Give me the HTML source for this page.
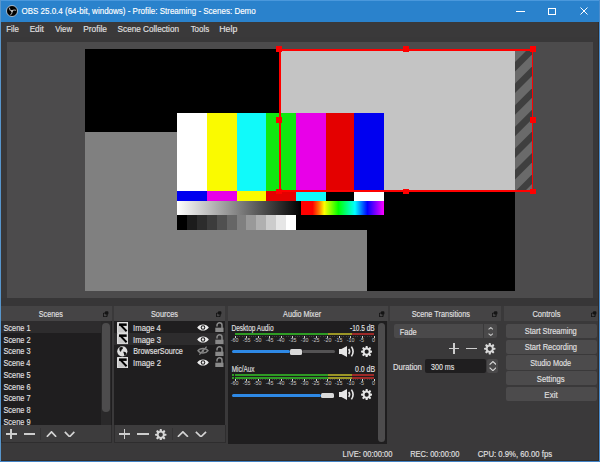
<!DOCTYPE html>
<html><head><meta charset="utf-8">
<style>
*{margin:0;padding:0;box-sizing:border-box}
html,body{width:600px;height:462px;overflow:hidden;background:#3a393a;font-family:"Liberation Sans",sans-serif;color:#e1e0e1}
.a{position:absolute}
.t{position:absolute;white-space:nowrap;line-height:1;transform-origin:0 0}
</style></head><body>
<div class="a" style="left:0px;top:0px;width:600px;height:22px;background:#2a82cc;"></div>
<div class="a" style="left:0px;top:0px;width:600px;height:1px;background:#4a98dc;"></div>
<svg class="a" style="left:5px;top:4px" width="14" height="14" viewBox="0 0 14 14"><circle cx="7" cy="7" r="5.5" fill="#000" stroke="#dfe8f2" stroke-width="0.7"/><g fill="none" stroke="#a8a8a8" stroke-width="1.1" stroke-linecap="round"><path d="M7 7Q4.6 6.6 4.4 4.0"/><path d="M7 7Q8.6 5.4 10.6 6.2"/><path d="M7 7Q7.6 9.4 5.8 10.6"/></g><circle cx="7" cy="7" r="0.9" fill="#c8c8c8"/></svg>
<div class="a" style="left:516px;top:10.5px;width:9px;height:1px;background:#ffffff;"></div>
<div class="a" style="left:548px;top:7.5px;width:7.5px;height:7px;background:transparent;border:1px solid #fff;box-sizing:border-box"></div>
<svg class="a" style="left:580px;top:7px" width="8" height="8" viewBox="0 0 8 8"><path d="M0.5 0.5L7.5 7.5M7.5 0.5L0.5 7.5" stroke="#fff" stroke-width="1"/></svg>
<div class="a" style="left:1px;top:22px;width:598px;height:15px;background:#3a393a;"></div>
<div class="a" style="left:1px;top:37px;width:598px;height:269px;background:#393839;"></div>
<div class="a" style="left:7px;top:42px;width:586px;height:255.5px;background:#4c4b4c;"></div>
<div class="a" style="left:85px;top:49px;width:430px;height:242px;background:#000;"></div>
<div class="a" style="left:85px;top:132px;width:282px;height:159px;background:#808080;"></div>
<div class="a" style="left:280px;top:49px;width:235px;height:142px;background:#c4c4c4;"></div>
<svg class="a" style="left:515px;top:49px" width="17" height="142" viewBox="0 0 17 142"><rect width="17" height="142" fill="#6a6a6a"/><path d="M-8.60 0L0.90 0L-199.10 200L-208.60 200Z" fill="#3f3f3f"/><path d="M13.00 0L22.50 0L-177.50 200L-187.00 200Z" fill="#3f3f3f"/><path d="M34.60 0L44.10 0L-155.90 200L-165.40 200Z" fill="#3f3f3f"/><path d="M56.20 0L65.70 0L-134.30 200L-143.80 200Z" fill="#3f3f3f"/><path d="M77.80 0L87.30 0L-112.70 200L-122.20 200Z" fill="#3f3f3f"/><path d="M99.40 0L108.90 0L-91.10 200L-100.60 200Z" fill="#3f3f3f"/><path d="M121.00 0L130.50 0L-69.50 200L-79.00 200Z" fill="#3f3f3f"/><path d="M142.60 0L152.10 0L-47.90 200L-57.40 200Z" fill="#3f3f3f"/><path d="M164.20 0L173.70 0L-26.30 200L-35.80 200Z" fill="#3f3f3f"/></svg>
<div class="a" style="left:177px;top:113px;width:207px;height:117px;background:#000;"></div>
<div class="a" style="left:177px;top:113px;width:30px;height:78px;background:#ffffff;"></div>
<div class="a" style="left:177px;top:191px;width:30px;height:10px;background:#0000f0;"></div>
<div class="a" style="left:207px;top:113px;width:30px;height:78px;background:#fafa00;"></div>
<div class="a" style="left:207px;top:191px;width:30px;height:10px;background:#e800e8;"></div>
<div class="a" style="left:237px;top:113px;width:29px;height:78px;background:#10fafa;"></div>
<div class="a" style="left:237px;top:191px;width:29px;height:10px;background:#fafa00;"></div>
<div class="a" style="left:266px;top:113px;width:30px;height:78px;background:#10e810;"></div>
<div class="a" style="left:266px;top:191px;width:30px;height:10px;background:#e40000;"></div>
<div class="a" style="left:296px;top:113px;width:30px;height:78px;background:#e800e8;"></div>
<div class="a" style="left:296px;top:191px;width:30px;height:10px;background:#10fafa;"></div>
<div class="a" style="left:326px;top:113px;width:28px;height:78px;background:#e40000;"></div>
<div class="a" style="left:326px;top:191px;width:28px;height:10px;background:#000000;"></div>
<div class="a" style="left:354px;top:113px;width:30px;height:78px;background:#0000f0;"></div>
<div class="a" style="left:354px;top:191px;width:30px;height:10px;background:#ffffff;"></div>
<div class="a" style="left:177px;top:201px;width:124px;height:14px;background:linear-gradient(to right,#fff,#000);"></div>
<div class="a" style="left:301px;top:201px;width:83px;height:14px;background:linear-gradient(to right,#f00 0%,#f00 14%,#ff8000 22%,#ffff00 28%,#00ff00 45%,#00ffff 65%,#0000ff 80%,#ff00ff 100%);"></div>
<div class="a" style="left:177.0px;top:215px;width:9.97px;height:15px;background:#000;"></div>
<div class="a" style="left:186.92px;top:215px;width:9.97px;height:15px;background:#1c1c1c;"></div>
<div class="a" style="left:196.83px;top:215px;width:9.97px;height:15px;background:#2c2c2c;"></div>
<div class="a" style="left:206.75px;top:215px;width:9.97px;height:15px;background:#3c3c3c;"></div>
<div class="a" style="left:216.67px;top:215px;width:9.97px;height:15px;background:#505050;"></div>
<div class="a" style="left:226.58px;top:215px;width:9.97px;height:15px;background:#666;"></div>
<div class="a" style="left:236.5px;top:215px;width:9.97px;height:15px;background:#808080;"></div>
<div class="a" style="left:246.42px;top:215px;width:9.97px;height:15px;background:#999;"></div>
<div class="a" style="left:256.33px;top:215px;width:9.97px;height:15px;background:#b0b0b0;"></div>
<div class="a" style="left:266.25px;top:215px;width:9.97px;height:15px;background:#ccc;"></div>
<div class="a" style="left:276.17px;top:215px;width:9.97px;height:15px;background:#e6e6e6;"></div>
<div class="a" style="left:286.08px;top:215px;width:9.97px;height:15px;background:#fff;"></div>
<div class="a" style="left:279.2px;top:49.2px;width:254px;height:1.7px;background:#f00;"></div>
<div class="a" style="left:279.2px;top:189.5px;width:254px;height:2px;background:#f00;"></div>
<div class="a" style="left:279.2px;top:49.2px;width:1.7px;height:142px;background:#f00;"></div>
<div class="a" style="left:531.5px;top:49.2px;width:1.9px;height:142px;background:#f00;"></div>
<div class="a" style="left:276px;top:46.1px;width:6px;height:5.8px;background:#f00;"></div>
<div class="a" style="left:276px;top:117.39999999999999px;width:6px;height:5.8px;background:#f00;"></div>
<div class="a" style="left:276px;top:188.7px;width:6px;height:5.8px;background:#f00;"></div>
<div class="a" style="left:403px;top:46.1px;width:6px;height:5.8px;background:#f00;"></div>
<div class="a" style="left:403px;top:188.7px;width:6px;height:5.8px;background:#f00;"></div>
<div class="a" style="left:530px;top:46.1px;width:6px;height:5.8px;background:#f00;"></div>
<div class="a" style="left:530px;top:117.39999999999999px;width:6px;height:5.8px;background:#f00;"></div>
<div class="a" style="left:530px;top:188.7px;width:6px;height:5.8px;background:#f00;"></div>
<div class="a" style="left:1px;top:297.5px;width:598px;height:8.5px;background:#373637;"></div>
<div class="a" style="left:1px;top:443px;width:598px;height:17px;background:#3a393a;"></div>
<div class="a" style="left:1px;top:306.2px;width:111px;height:14.6px;background:#454445;"></div>
<svg class="a" style="left:103px;top:311px" width="6" height="6" viewBox="0 0 6 6"><rect x="2" y="0.2" width="3.4" height="3.4" rx="0.8" fill="#151515"/><rect x="0.3" y="2" width="3.8" height="3.7" rx="1.2" fill="none" stroke="#151515" stroke-width="1.1"/></svg>
<div class="a" style="left:1px;top:321px;width:111px;height:104px;background:#1f1e1f;"></div>
<div class="a" style="left:1px;top:321px;width:99.8px;height:12.4px;background:#2d2c2d;"></div>
<div class="a" style="left:100.8px;top:321px;width:10.6px;height:104px;background:#2a292a;"></div>
<div class="a" style="left:102.3px;top:322.8px;width:7.6px;height:89px;background:#4d4c4d;border-radius:3.8px"></div>
<div class="a" style="left:1px;top:424.8px;width:111px;height:18.6px;background:#3d3c3d;border:1px solid #2e2d2e;border-top:none;box-sizing:border-box"></div>
<div class="a" style="left:5.5px;top:433.2px;width:11.0px;height:1.4px;background:#cdcdcd;"></div>
<div class="a" style="left:10.3px;top:428.8px;width:1.4px;height:10.199999999999989px;background:#cdcdcd;"></div>
<div class="a" style="left:24px;top:433.2px;width:11px;height:1.4px;background:#cdcdcd;"></div>
<div class="a" style="left:40px;top:428px;width:1px;height:12px;background:#343334;"></div>
<svg class="a" style="left:46px;top:430.6px" width="11" height="6.599999999999966" viewBox="0 0 11 6.599999999999966"><path d="M0.85 5.749999999999966L5.5 0.85L10.15 5.749999999999966" fill="none" stroke="#d4d4d4" stroke-width="1.7"/></svg>
<svg class="a" style="left:63.8px;top:430.6px" width="11.200000000000003" height="6.599999999999966" viewBox="0 0 11.200000000000003 6.599999999999966"><path d="M0.85 0.85L5.600000000000001 5.749999999999966L10.350000000000003 0.85" fill="none" stroke="#d4d4d4" stroke-width="1.7"/></svg>
<div class="a" style="left:114px;top:306.2px;width:111px;height:14.6px;background:#454445;"></div>
<svg class="a" style="left:216px;top:311px" width="6" height="6" viewBox="0 0 6 6"><rect x="2" y="0.2" width="3.4" height="3.4" rx="0.8" fill="#151515"/><rect x="0.3" y="2" width="3.8" height="3.7" rx="1.2" fill="none" stroke="#151515" stroke-width="1.1"/></svg>
<div class="a" style="left:114px;top:321px;width:111px;height:104px;background:#1f1e1f;"></div>
<div class="a" style="left:114px;top:333.2px;width:111px;height:12px;background:#2d2c2d;"></div>
<svg class="a" style="left:116.8px;top:321.7px" width="11.5" height="11.2" viewBox="0 0 11.5 11.2"><rect x="0.6" y="0.6" width="10.3" height="10" fill="#dadada" stroke="#eaeaea" stroke-width="1"/><path d="M1.2 2.2L10.3 10.4H1.2Z" fill="#c6c6c6"/><rect x="2.0" y="1.4" width="7.7" height="2.5" fill="#000"/><path d="M3.2 2.6L9.6 9.2" stroke="#000" stroke-width="2"/></svg>
<svg class="a" style="left:197.2px;top:324.2px" width="12" height="7" viewBox="0 0 12 7"><path d="M0.2 3.5C2.6 -0.6 9.4 -0.6 11.8 3.5C9.4 7.6 2.6 7.6 0.2 3.5Z" fill="#ececec"/><circle cx="6" cy="3.5" r="2.3" fill="#1f1e1f"/><circle cx="6" cy="3.5" r="1.2" fill="#ececec"/></svg>
<svg class="a" style="left:214.5px;top:322.2px" width="9" height="10" viewBox="0 0 9 10"><path d="M2.0 4.4V3.3A2.5 2.5 0 0 1 7 3.3V6" fill="none" stroke="#8a8a8a" stroke-width="1.5"/><rect x="0.3" y="5.7" width="8.2" height="4.6" fill="#8a8a8a"/></svg>
<svg class="a" style="left:116.8px;top:333.4px" width="11.5" height="11.2" viewBox="0 0 11.5 11.2"><rect x="0.6" y="0.6" width="10.3" height="10" fill="#dadada" stroke="#eaeaea" stroke-width="1"/><path d="M1.2 2.2L10.3 10.4H1.2Z" fill="#c6c6c6"/><rect x="2.0" y="1.4" width="7.7" height="2.5" fill="#000"/><path d="M3.2 2.6L9.6 9.2" stroke="#000" stroke-width="2"/></svg>
<svg class="a" style="left:197.2px;top:335.9px" width="12" height="7" viewBox="0 0 12 7"><path d="M0.2 3.5C2.6 -0.6 9.4 -0.6 11.8 3.5C9.4 7.6 2.6 7.6 0.2 3.5Z" fill="#ececec"/><circle cx="6" cy="3.5" r="2.3" fill="#1f1e1f"/><circle cx="6" cy="3.5" r="1.2" fill="#ececec"/></svg>
<svg class="a" style="left:214.5px;top:333.9px" width="9" height="10" viewBox="0 0 9 10"><path d="M2.0 4.4V3.3A2.5 2.5 0 0 1 7 3.3V6" fill="none" stroke="#8a8a8a" stroke-width="1.5"/><rect x="0.3" y="5.7" width="8.2" height="4.6" fill="#8a8a8a"/></svg>
<svg class="a" style="left:116.6px;top:345.6px" width="11" height="11" viewBox="0 0 11 11"><circle cx="5.3" cy="5.3" r="5.1" fill="#dedede"/><path d="M2.4 1.4Q4.8 0.2 6.2 1.8Q5.6 3.4 4.6 3.8Q4.4 5.6 3.2 5.8Q2 4 2.4 1.4Z" fill="#111"/><path d="M6.2 5.8Q8.6 5.2 9.6 7.4Q8.8 9.2 7.2 9.8Q7.2 8 6.2 5.8Z" fill="#111"/></svg>
<svg class="a" style="left:197.2px;top:345.9px" width="12" height="9" viewBox="0 0 12 9"><path d="M1 4.7C3 1.6 9 1.6 11 4.7C9 7.8 3 7.8 1 4.7Z" fill="none" stroke="#858585" stroke-width="1.5"/><circle cx="6" cy="4.7" r="1.2" fill="#858585"/><path d="M2.4 8.6L9.6 0.6" stroke="#858585" stroke-width="1.3"/></svg>
<svg class="a" style="left:214.5px;top:345.59999999999997px" width="9" height="10" viewBox="0 0 9 10"><path d="M2.0 4.4V3.3A2.5 2.5 0 0 1 7 3.3V6" fill="none" stroke="#8a8a8a" stroke-width="1.5"/><rect x="0.3" y="5.7" width="8.2" height="4.6" fill="#8a8a8a"/></svg>
<svg class="a" style="left:116.8px;top:356.8px" width="11.5" height="11.2" viewBox="0 0 11.5 11.2"><rect x="0.6" y="0.6" width="10.3" height="10" fill="#dadada" stroke="#eaeaea" stroke-width="1"/><path d="M1.2 2.2L10.3 10.4H1.2Z" fill="#c6c6c6"/><rect x="2.0" y="1.4" width="7.7" height="2.5" fill="#000"/><path d="M3.2 2.6L9.6 9.2" stroke="#000" stroke-width="2"/></svg>
<svg class="a" style="left:197.2px;top:359.3px" width="12" height="7" viewBox="0 0 12 7"><path d="M0.2 3.5C2.6 -0.6 9.4 -0.6 11.8 3.5C9.4 7.6 2.6 7.6 0.2 3.5Z" fill="#ececec"/><circle cx="6" cy="3.5" r="2.3" fill="#1f1e1f"/><circle cx="6" cy="3.5" r="1.2" fill="#ececec"/></svg>
<svg class="a" style="left:214.5px;top:357.3px" width="9" height="10" viewBox="0 0 9 10"><path d="M2.0 4.4V3.3A2.5 2.5 0 0 1 7 3.3V6" fill="none" stroke="#8a8a8a" stroke-width="1.5"/><rect x="0.3" y="5.7" width="8.2" height="4.6" fill="#8a8a8a"/></svg>
<div class="a" style="left:114px;top:424.8px;width:111.5px;height:18.6px;background:#3d3c3d;border:1px solid #2e2d2e;border-top:none;box-sizing:border-box"></div>
<div class="a" style="left:119px;top:433.40000000000003px;width:11.300000000000011px;height:1.4px;background:#cdcdcd;"></div>
<div class="a" style="left:123.95px;top:429px;width:1.4px;height:10.199999999999989px;background:#cdcdcd;"></div>
<div class="a" style="left:137.3px;top:433.3px;width:11.399999999999977px;height:1.4px;background:#cdcdcd;"></div>
<svg class="a" style="left:155.2px;top:428.5px" width="11.5" height="11.5" viewBox="0 0 11.5 11.5"><path fill-rule="evenodd" d="M11.44,4.89 L11.44,6.61 L9.36,7.11 L9.26,7.34 L10.38,9.16 L9.16,10.38 L7.34,9.26 L7.11,9.36 L6.61,11.44 L4.89,11.44 L4.39,9.36 L4.16,9.26 L2.34,10.38 L1.12,9.16 L2.24,7.34 L2.14,7.11 L0.06,6.61 L0.06,4.89 L2.14,4.39 L2.24,4.16 L1.12,2.34 L2.34,1.12 L4.16,2.24 L4.39,2.14 L4.89,0.06 L6.61,0.06 L7.11,2.14 L7.34,2.24 L9.16,1.12 L10.38,2.34 L9.26,4.16 L9.36,4.39Z M5.75 3.6225A2.1275 2.1275 0 1 0 5.75 7.8774999999999995A2.1275 2.1275 0 1 0 5.75 3.6225Z" fill="#d8d8d8"/></svg>
<div class="a" style="left:171.5px;top:428px;width:1px;height:12px;background:#343334;"></div>
<svg class="a" style="left:177px;top:430.6px" width="11.800000000000011" height="6.599999999999966" viewBox="0 0 11.800000000000011 6.599999999999966"><path d="M0.85 5.749999999999966L5.900000000000006 0.85L10.950000000000012 5.749999999999966" fill="none" stroke="#d4d4d4" stroke-width="1.7"/></svg>
<svg class="a" style="left:195.3px;top:430.6px" width="11.899999999999977" height="6.599999999999966" viewBox="0 0 11.899999999999977 6.599999999999966"><path d="M0.85 0.85L5.949999999999989 5.749999999999966L11.049999999999978 0.85" fill="none" stroke="#d4d4d4" stroke-width="1.7"/></svg>
<div class="a" style="left:227.5px;top:306.2px;width:160.5px;height:14.6px;background:#454445;"></div>
<svg class="a" style="left:378.6px;top:311px" width="6" height="6" viewBox="0 0 6 6"><rect x="2" y="0.2" width="3.4" height="3.4" rx="0.8" fill="#151515"/><rect x="0.3" y="2" width="3.8" height="3.7" rx="1.2" fill="none" stroke="#151515" stroke-width="1.1"/></svg>
<div class="a" style="left:227.5px;top:321px;width:159.5px;height:122.6px;background:#1f1e1f;"></div>
<div class="a" style="left:235px;top:333.2px;width:92.67px;height:2.2px;background:#2e9b24;"></div>
<div class="a" style="left:327.67px;top:333.2px;width:24.79px;height:2.2px;background:#9a9626;"></div>
<div class="a" style="left:352.46px;top:333.2px;width:21.54px;height:2.2px;background:#9e2a28;"></div>
<div class="a" style="left:234.5px;top:335.5px;width:1px;height:2px;background:#d0d0d0;"></div>
<div class="a" style="left:236.92px;top:335.5px;width:0.8px;height:1px;background:#444344;"></div>
<div class="a" style="left:239.23px;top:335.5px;width:0.8px;height:1px;background:#444344;"></div>
<div class="a" style="left:241.55px;top:335.5px;width:0.8px;height:1px;background:#444344;"></div>
<div class="a" style="left:243.87px;top:335.5px;width:0.8px;height:1px;background:#444344;"></div>
<div class="a" style="left:246.08px;top:335.5px;width:1px;height:2px;background:#d0d0d0;"></div>
<div class="a" style="left:248.5px;top:335.5px;width:0.8px;height:1px;background:#444344;"></div>
<div class="a" style="left:250.82px;top:335.5px;width:0.8px;height:1px;background:#444344;"></div>
<div class="a" style="left:253.13px;top:335.5px;width:0.8px;height:1px;background:#444344;"></div>
<div class="a" style="left:255.45px;top:335.5px;width:0.8px;height:1px;background:#444344;"></div>
<div class="a" style="left:257.67px;top:335.5px;width:1px;height:2px;background:#d0d0d0;"></div>
<div class="a" style="left:260.08px;top:335.5px;width:0.8px;height:1px;background:#444344;"></div>
<div class="a" style="left:262.4px;top:335.5px;width:0.8px;height:1px;background:#444344;"></div>
<div class="a" style="left:264.72px;top:335.5px;width:0.8px;height:1px;background:#444344;"></div>
<div class="a" style="left:267.03px;top:335.5px;width:0.8px;height:1px;background:#444344;"></div>
<div class="a" style="left:269.25px;top:335.5px;width:1px;height:2px;background:#d0d0d0;"></div>
<div class="a" style="left:271.67px;top:335.5px;width:0.8px;height:1px;background:#444344;"></div>
<div class="a" style="left:273.98px;top:335.5px;width:0.8px;height:1px;background:#444344;"></div>
<div class="a" style="left:276.3px;top:335.5px;width:0.8px;height:1px;background:#444344;"></div>
<div class="a" style="left:278.62px;top:335.5px;width:0.8px;height:1px;background:#444344;"></div>
<div class="a" style="left:280.83px;top:335.5px;width:1px;height:2px;background:#d0d0d0;"></div>
<div class="a" style="left:283.25px;top:335.5px;width:0.8px;height:1px;background:#444344;"></div>
<div class="a" style="left:285.57px;top:335.5px;width:0.8px;height:1px;background:#444344;"></div>
<div class="a" style="left:287.88px;top:335.5px;width:0.8px;height:1px;background:#444344;"></div>
<div class="a" style="left:290.2px;top:335.5px;width:0.8px;height:1px;background:#444344;"></div>
<div class="a" style="left:292.42px;top:335.5px;width:1px;height:2px;background:#d0d0d0;"></div>
<div class="a" style="left:294.83px;top:335.5px;width:0.8px;height:1px;background:#444344;"></div>
<div class="a" style="left:297.15px;top:335.5px;width:0.8px;height:1px;background:#444344;"></div>
<div class="a" style="left:299.47px;top:335.5px;width:0.8px;height:1px;background:#444344;"></div>
<div class="a" style="left:301.78px;top:335.5px;width:0.8px;height:1px;background:#444344;"></div>
<div class="a" style="left:304.0px;top:335.5px;width:1px;height:2px;background:#d0d0d0;"></div>
<div class="a" style="left:306.42px;top:335.5px;width:0.8px;height:1px;background:#444344;"></div>
<div class="a" style="left:308.73px;top:335.5px;width:0.8px;height:1px;background:#444344;"></div>
<div class="a" style="left:311.05px;top:335.5px;width:0.8px;height:1px;background:#444344;"></div>
<div class="a" style="left:313.37px;top:335.5px;width:0.8px;height:1px;background:#444344;"></div>
<div class="a" style="left:315.58px;top:335.5px;width:1px;height:2px;background:#d0d0d0;"></div>
<div class="a" style="left:318.0px;top:335.5px;width:0.8px;height:1px;background:#444344;"></div>
<div class="a" style="left:320.32px;top:335.5px;width:0.8px;height:1px;background:#444344;"></div>
<div class="a" style="left:322.63px;top:335.5px;width:0.8px;height:1px;background:#444344;"></div>
<div class="a" style="left:324.95px;top:335.5px;width:0.8px;height:1px;background:#444344;"></div>
<div class="a" style="left:327.17px;top:335.5px;width:1px;height:2px;background:#d0d0d0;"></div>
<div class="a" style="left:329.58px;top:335.5px;width:0.8px;height:1px;background:#444344;"></div>
<div class="a" style="left:331.9px;top:335.5px;width:0.8px;height:1px;background:#444344;"></div>
<div class="a" style="left:334.22px;top:335.5px;width:0.8px;height:1px;background:#444344;"></div>
<div class="a" style="left:336.53px;top:335.5px;width:0.8px;height:1px;background:#444344;"></div>
<div class="a" style="left:338.75px;top:335.5px;width:1px;height:2px;background:#d0d0d0;"></div>
<div class="a" style="left:341.17px;top:335.5px;width:0.8px;height:1px;background:#444344;"></div>
<div class="a" style="left:343.48px;top:335.5px;width:0.8px;height:1px;background:#444344;"></div>
<div class="a" style="left:345.8px;top:335.5px;width:0.8px;height:1px;background:#444344;"></div>
<div class="a" style="left:348.12px;top:335.5px;width:0.8px;height:1px;background:#444344;"></div>
<div class="a" style="left:350.33px;top:335.5px;width:1px;height:2px;background:#d0d0d0;"></div>
<div class="a" style="left:352.75px;top:335.5px;width:0.8px;height:1px;background:#444344;"></div>
<div class="a" style="left:355.07px;top:335.5px;width:0.8px;height:1px;background:#444344;"></div>
<div class="a" style="left:357.38px;top:335.5px;width:0.8px;height:1px;background:#444344;"></div>
<div class="a" style="left:359.7px;top:335.5px;width:0.8px;height:1px;background:#444344;"></div>
<div class="a" style="left:361.92px;top:335.5px;width:1px;height:2px;background:#d0d0d0;"></div>
<div class="a" style="left:364.33px;top:335.5px;width:0.8px;height:1px;background:#444344;"></div>
<div class="a" style="left:366.65px;top:335.5px;width:0.8px;height:1px;background:#444344;"></div>
<div class="a" style="left:368.97px;top:335.5px;width:0.8px;height:1px;background:#444344;"></div>
<div class="a" style="left:371.28px;top:335.5px;width:0.8px;height:1px;background:#444344;"></div>
<div class="a" style="left:373.5px;top:335.5px;width:1px;height:2px;background:#d0d0d0;"></div>
<div class="t" style="left:225.00px;width:20px;text-align:center;top:337.5px;font-size:5.6px;color:#c8c8c8;transform:scaleX(0.95)">-60</div>
<div class="t" style="left:236.58px;width:20px;text-align:center;top:337.5px;font-size:5.6px;color:#c8c8c8;transform:scaleX(0.95)">-55</div>
<div class="t" style="left:248.17px;width:20px;text-align:center;top:337.5px;font-size:5.6px;color:#c8c8c8;transform:scaleX(0.95)">-50</div>
<div class="t" style="left:259.75px;width:20px;text-align:center;top:337.5px;font-size:5.6px;color:#c8c8c8;transform:scaleX(0.95)">-45</div>
<div class="t" style="left:271.33px;width:20px;text-align:center;top:337.5px;font-size:5.6px;color:#c8c8c8;transform:scaleX(0.95)">-40</div>
<div class="t" style="left:282.92px;width:20px;text-align:center;top:337.5px;font-size:5.6px;color:#c8c8c8;transform:scaleX(0.95)">-35</div>
<div class="t" style="left:294.50px;width:20px;text-align:center;top:337.5px;font-size:5.6px;color:#c8c8c8;transform:scaleX(0.95)">-30</div>
<div class="t" style="left:306.08px;width:20px;text-align:center;top:337.5px;font-size:5.6px;color:#c8c8c8;transform:scaleX(0.95)">-25</div>
<div class="t" style="left:317.67px;width:20px;text-align:center;top:337.5px;font-size:5.6px;color:#c8c8c8;transform:scaleX(0.95)">-20</div>
<div class="t" style="left:329.25px;width:20px;text-align:center;top:337.5px;font-size:5.6px;color:#c8c8c8;transform:scaleX(0.95)">-15</div>
<div class="t" style="left:340.83px;width:20px;text-align:center;top:337.5px;font-size:5.6px;color:#c8c8c8;transform:scaleX(0.95)">-10</div>
<div class="t" style="left:352.42px;width:20px;text-align:center;top:337.5px;font-size:5.6px;color:#c8c8c8;transform:scaleX(0.95)">-5</div>
<div class="t" style="left:364.00px;width:20px;text-align:center;top:337.5px;font-size:5.6px;color:#c8c8c8;transform:scaleX(0.95)">0</div>
<div class="a" style="left:235px;top:374px;width:92.67px;height:2.2px;background:#2e9b24;"></div>
<div class="a" style="left:327.67px;top:374px;width:24.79px;height:2.2px;background:#9a9626;"></div>
<div class="a" style="left:352.46px;top:374px;width:21.54px;height:2.2px;background:#9e2a28;"></div>
<div class="a" style="left:235px;top:377px;width:92.67px;height:2.0px;background:#2e9b24;"></div>
<div class="a" style="left:327.67px;top:377px;width:24.79px;height:2.0px;background:#9a9626;"></div>
<div class="a" style="left:352.46px;top:377px;width:21.54px;height:2.0px;background:#9e2a28;"></div>
<div class="a" style="left:232px;top:374px;width:2px;height:2px;background:#2e9b24;"></div>
<div class="a" style="left:232px;top:377px;width:2px;height:2px;background:#2e9b24;"></div>
<div class="a" style="left:234.5px;top:379.3px;width:1px;height:2px;background:#d0d0d0;"></div>
<div class="a" style="left:236.92px;top:379.3px;width:0.8px;height:1px;background:#444344;"></div>
<div class="a" style="left:239.23px;top:379.3px;width:0.8px;height:1px;background:#444344;"></div>
<div class="a" style="left:241.55px;top:379.3px;width:0.8px;height:1px;background:#444344;"></div>
<div class="a" style="left:243.87px;top:379.3px;width:0.8px;height:1px;background:#444344;"></div>
<div class="a" style="left:246.08px;top:379.3px;width:1px;height:2px;background:#d0d0d0;"></div>
<div class="a" style="left:248.5px;top:379.3px;width:0.8px;height:1px;background:#444344;"></div>
<div class="a" style="left:250.82px;top:379.3px;width:0.8px;height:1px;background:#444344;"></div>
<div class="a" style="left:253.13px;top:379.3px;width:0.8px;height:1px;background:#444344;"></div>
<div class="a" style="left:255.45px;top:379.3px;width:0.8px;height:1px;background:#444344;"></div>
<div class="a" style="left:257.67px;top:379.3px;width:1px;height:2px;background:#d0d0d0;"></div>
<div class="a" style="left:260.08px;top:379.3px;width:0.8px;height:1px;background:#444344;"></div>
<div class="a" style="left:262.4px;top:379.3px;width:0.8px;height:1px;background:#444344;"></div>
<div class="a" style="left:264.72px;top:379.3px;width:0.8px;height:1px;background:#444344;"></div>
<div class="a" style="left:267.03px;top:379.3px;width:0.8px;height:1px;background:#444344;"></div>
<div class="a" style="left:269.25px;top:379.3px;width:1px;height:2px;background:#d0d0d0;"></div>
<div class="a" style="left:271.67px;top:379.3px;width:0.8px;height:1px;background:#444344;"></div>
<div class="a" style="left:273.98px;top:379.3px;width:0.8px;height:1px;background:#444344;"></div>
<div class="a" style="left:276.3px;top:379.3px;width:0.8px;height:1px;background:#444344;"></div>
<div class="a" style="left:278.62px;top:379.3px;width:0.8px;height:1px;background:#444344;"></div>
<div class="a" style="left:280.83px;top:379.3px;width:1px;height:2px;background:#d0d0d0;"></div>
<div class="a" style="left:283.25px;top:379.3px;width:0.8px;height:1px;background:#444344;"></div>
<div class="a" style="left:285.57px;top:379.3px;width:0.8px;height:1px;background:#444344;"></div>
<div class="a" style="left:287.88px;top:379.3px;width:0.8px;height:1px;background:#444344;"></div>
<div class="a" style="left:290.2px;top:379.3px;width:0.8px;height:1px;background:#444344;"></div>
<div class="a" style="left:292.42px;top:379.3px;width:1px;height:2px;background:#d0d0d0;"></div>
<div class="a" style="left:294.83px;top:379.3px;width:0.8px;height:1px;background:#444344;"></div>
<div class="a" style="left:297.15px;top:379.3px;width:0.8px;height:1px;background:#444344;"></div>
<div class="a" style="left:299.47px;top:379.3px;width:0.8px;height:1px;background:#444344;"></div>
<div class="a" style="left:301.78px;top:379.3px;width:0.8px;height:1px;background:#444344;"></div>
<div class="a" style="left:304.0px;top:379.3px;width:1px;height:2px;background:#d0d0d0;"></div>
<div class="a" style="left:306.42px;top:379.3px;width:0.8px;height:1px;background:#444344;"></div>
<div class="a" style="left:308.73px;top:379.3px;width:0.8px;height:1px;background:#444344;"></div>
<div class="a" style="left:311.05px;top:379.3px;width:0.8px;height:1px;background:#444344;"></div>
<div class="a" style="left:313.37px;top:379.3px;width:0.8px;height:1px;background:#444344;"></div>
<div class="a" style="left:315.58px;top:379.3px;width:1px;height:2px;background:#d0d0d0;"></div>
<div class="a" style="left:318.0px;top:379.3px;width:0.8px;height:1px;background:#444344;"></div>
<div class="a" style="left:320.32px;top:379.3px;width:0.8px;height:1px;background:#444344;"></div>
<div class="a" style="left:322.63px;top:379.3px;width:0.8px;height:1px;background:#444344;"></div>
<div class="a" style="left:324.95px;top:379.3px;width:0.8px;height:1px;background:#444344;"></div>
<div class="a" style="left:327.17px;top:379.3px;width:1px;height:2px;background:#d0d0d0;"></div>
<div class="a" style="left:329.58px;top:379.3px;width:0.8px;height:1px;background:#444344;"></div>
<div class="a" style="left:331.9px;top:379.3px;width:0.8px;height:1px;background:#444344;"></div>
<div class="a" style="left:334.22px;top:379.3px;width:0.8px;height:1px;background:#444344;"></div>
<div class="a" style="left:336.53px;top:379.3px;width:0.8px;height:1px;background:#444344;"></div>
<div class="a" style="left:338.75px;top:379.3px;width:1px;height:2px;background:#d0d0d0;"></div>
<div class="a" style="left:341.17px;top:379.3px;width:0.8px;height:1px;background:#444344;"></div>
<div class="a" style="left:343.48px;top:379.3px;width:0.8px;height:1px;background:#444344;"></div>
<div class="a" style="left:345.8px;top:379.3px;width:0.8px;height:1px;background:#444344;"></div>
<div class="a" style="left:348.12px;top:379.3px;width:0.8px;height:1px;background:#444344;"></div>
<div class="a" style="left:350.33px;top:379.3px;width:1px;height:2px;background:#d0d0d0;"></div>
<div class="a" style="left:352.75px;top:379.3px;width:0.8px;height:1px;background:#444344;"></div>
<div class="a" style="left:355.07px;top:379.3px;width:0.8px;height:1px;background:#444344;"></div>
<div class="a" style="left:357.38px;top:379.3px;width:0.8px;height:1px;background:#444344;"></div>
<div class="a" style="left:359.7px;top:379.3px;width:0.8px;height:1px;background:#444344;"></div>
<div class="a" style="left:361.92px;top:379.3px;width:1px;height:2px;background:#d0d0d0;"></div>
<div class="a" style="left:364.33px;top:379.3px;width:0.8px;height:1px;background:#444344;"></div>
<div class="a" style="left:366.65px;top:379.3px;width:0.8px;height:1px;background:#444344;"></div>
<div class="a" style="left:368.97px;top:379.3px;width:0.8px;height:1px;background:#444344;"></div>
<div class="a" style="left:371.28px;top:379.3px;width:0.8px;height:1px;background:#444344;"></div>
<div class="a" style="left:373.5px;top:379.3px;width:1px;height:2px;background:#d0d0d0;"></div>
<div class="t" style="left:225.00px;width:20px;text-align:center;top:381.3px;font-size:5.6px;color:#c8c8c8;transform:scaleX(0.95)">-60</div>
<div class="t" style="left:236.58px;width:20px;text-align:center;top:381.3px;font-size:5.6px;color:#c8c8c8;transform:scaleX(0.95)">-55</div>
<div class="t" style="left:248.17px;width:20px;text-align:center;top:381.3px;font-size:5.6px;color:#c8c8c8;transform:scaleX(0.95)">-50</div>
<div class="t" style="left:259.75px;width:20px;text-align:center;top:381.3px;font-size:5.6px;color:#c8c8c8;transform:scaleX(0.95)">-45</div>
<div class="t" style="left:271.33px;width:20px;text-align:center;top:381.3px;font-size:5.6px;color:#c8c8c8;transform:scaleX(0.95)">-40</div>
<div class="t" style="left:282.92px;width:20px;text-align:center;top:381.3px;font-size:5.6px;color:#c8c8c8;transform:scaleX(0.95)">-35</div>
<div class="t" style="left:294.50px;width:20px;text-align:center;top:381.3px;font-size:5.6px;color:#c8c8c8;transform:scaleX(0.95)">-30</div>
<div class="t" style="left:306.08px;width:20px;text-align:center;top:381.3px;font-size:5.6px;color:#c8c8c8;transform:scaleX(0.95)">-25</div>
<div class="t" style="left:317.67px;width:20px;text-align:center;top:381.3px;font-size:5.6px;color:#c8c8c8;transform:scaleX(0.95)">-20</div>
<div class="t" style="left:329.25px;width:20px;text-align:center;top:381.3px;font-size:5.6px;color:#c8c8c8;transform:scaleX(0.95)">-15</div>
<div class="t" style="left:340.83px;width:20px;text-align:center;top:381.3px;font-size:5.6px;color:#c8c8c8;transform:scaleX(0.95)">-10</div>
<div class="t" style="left:352.42px;width:20px;text-align:center;top:381.3px;font-size:5.6px;color:#c8c8c8;transform:scaleX(0.95)">-5</div>
<div class="t" style="left:364.00px;width:20px;text-align:center;top:381.3px;font-size:5.6px;color:#c8c8c8;transform:scaleX(0.95)">0</div>
<div class="a" style="left:231.7px;top:350px;width:58.60000000000002px;height:3px;background:#2e89e6;border-radius:1.5px"></div>
<div class="a" style="left:302px;top:350px;width:32.60000000000002px;height:3px;background:#545354;border-radius:1.5px"></div>
<div class="a" style="left:290.3px;top:349px;width:11.699999999999989px;height:5.5px;background:#d9d9d9;border-radius:1.5px"></div>
<div class="a" style="left:231.7px;top:393.7px;width:89.30000000000001px;height:3px;background:#2e89e6;border-radius:1.5px"></div>
<div class="a" style="left:321px;top:392.7px;width:13.199999999999989px;height:5.5px;background:#d9d9d9;border-radius:1.5px"></div>
<svg class="a" style="left:339px;top:345.8px" width="16" height="12" viewBox="0 0 16 12"><path d="M0 2.9H2.4L8 0V11L2.4 8.1H0Z" fill="#e6e6e6"/><path d="M9.7 3.1Q11.6 5.5 9.7 7.9" fill="none" stroke="#e6e6e6" stroke-width="1.6"/><path d="M12.4 0.6Q15.8 5.5 12.4 10.4" fill="none" stroke="#e6e6e6" stroke-width="1.6"/></svg>
<svg class="a" style="left:360.8px;top:346.2px" width="11.3" height="11.3" viewBox="0 0 11.3 11.3"><path fill-rule="evenodd" d="M11.24,4.81 L11.24,6.49 L9.19,6.98 L9.10,7.21 L10.20,9.00 L9.00,10.20 L7.21,9.10 L6.98,9.19 L6.49,11.24 L4.81,11.24 L4.32,9.19 L4.09,9.10 L2.30,10.20 L1.10,9.00 L2.20,7.21 L2.11,6.98 L0.06,6.49 L0.06,4.81 L2.11,4.32 L2.20,4.09 L1.10,2.30 L2.30,1.10 L4.09,2.20 L4.32,2.11 L4.81,0.06 L6.49,0.06 L6.98,2.11 L7.21,2.20 L9.00,1.10 L10.20,2.30 L9.10,4.09 L9.19,4.32Z M5.65 3.5595000000000003A2.0905 2.0905 0 1 0 5.65 7.740500000000001A2.0905 2.0905 0 1 0 5.65 3.5595000000000003Z" fill="#e6e6e6"/></svg>
<svg class="a" style="left:339px;top:388.8px" width="16" height="12" viewBox="0 0 16 12"><path d="M0 2.9H2.4L8 0V11L2.4 8.1H0Z" fill="#e6e6e6"/><path d="M9.7 3.1Q11.6 5.5 9.7 7.9" fill="none" stroke="#e6e6e6" stroke-width="1.6"/><path d="M12.4 0.6Q15.8 5.5 12.4 10.4" fill="none" stroke="#e6e6e6" stroke-width="1.6"/></svg>
<svg class="a" style="left:360.8px;top:389.2px" width="11.3" height="11.3" viewBox="0 0 11.3 11.3"><path fill-rule="evenodd" d="M11.24,4.81 L11.24,6.49 L9.19,6.98 L9.10,7.21 L10.20,9.00 L9.00,10.20 L7.21,9.10 L6.98,9.19 L6.49,11.24 L4.81,11.24 L4.32,9.19 L4.09,9.10 L2.30,10.20 L1.10,9.00 L2.20,7.21 L2.11,6.98 L0.06,6.49 L0.06,4.81 L2.11,4.32 L2.20,4.09 L1.10,2.30 L2.30,1.10 L4.09,2.20 L4.32,2.11 L4.81,0.06 L6.49,0.06 L6.98,2.11 L7.21,2.20 L9.00,1.10 L10.20,2.30 L9.10,4.09 L9.19,4.32Z M5.65 3.5595000000000003A2.0905 2.0905 0 1 0 5.65 7.740500000000001A2.0905 2.0905 0 1 0 5.65 3.5595000000000003Z" fill="#e6e6e6"/></svg>
<div class="a" style="left:378.2px;top:323px;width:7px;height:118.8px;background:#4d4c4d;border-radius:3.5px"></div>
<div class="a" style="left:389.5px;top:306.2px;width:111.5px;height:14.6px;background:#454445;"></div>
<svg class="a" style="left:492px;top:311px" width="6" height="6" viewBox="0 0 6 6"><rect x="2" y="0.2" width="3.4" height="3.4" rx="0.8" fill="#151515"/><rect x="0.3" y="2" width="3.8" height="3.7" rx="1.2" fill="none" stroke="#151515" stroke-width="1.1"/></svg>
<div class="a" style="left:393.7px;top:324.3px;width:89.5px;height:14px;background:#4a494a;border-radius:2px 0 0 2px"></div>
<div class="a" style="left:484.2px;top:324.3px;width:13.3px;height:14px;background:#4a494a;border-radius:0 2px 2px 0"></div>
<svg class="a" style="left:487.9px;top:327.4px" width="5.600000000000023" height="3.0" viewBox="0 0 5.600000000000023 3.0"><path d="M0.55 2.45L2.8000000000000114 0.55L5.050000000000023 2.45" fill="none" stroke="#c4c4c4" stroke-width="1.1"/></svg>
<svg class="a" style="left:487.9px;top:333px" width="5.600000000000023" height="3" viewBox="0 0 5.600000000000023 3"><path d="M0.55 0.55L2.8000000000000114 2.45L5.050000000000023 0.55" fill="none" stroke="#c4c4c4" stroke-width="1.1"/></svg>
<div class="a" style="left:448.5px;top:347.95px;width:10.899999999999977px;height:1.4px;background:#cdcdcd;"></div>
<div class="a" style="left:453.25px;top:343.2px;width:1.4px;height:10.900000000000034px;background:#cdcdcd;"></div>
<div class="a" style="left:466.4px;top:348.0px;width:10.600000000000023px;height:1.4px;background:#cdcdcd;"></div>
<svg class="a" style="left:484.2px;top:343.2px" width="11.5" height="11.5" viewBox="0 0 11.5 11.5"><path fill-rule="evenodd" d="M11.44,4.89 L11.44,6.61 L9.36,7.11 L9.26,7.34 L10.38,9.16 L9.16,10.38 L7.34,9.26 L7.11,9.36 L6.61,11.44 L4.89,11.44 L4.39,9.36 L4.16,9.26 L2.34,10.38 L1.12,9.16 L2.24,7.34 L2.14,7.11 L0.06,6.61 L0.06,4.89 L2.14,4.39 L2.24,4.16 L1.12,2.34 L2.34,1.12 L4.16,2.24 L4.39,2.14 L4.89,0.06 L6.61,0.06 L7.11,2.14 L7.34,2.24 L9.16,1.12 L10.38,2.34 L9.26,4.16 L9.36,4.39Z M5.75 3.6225A2.1275 2.1275 0 1 0 5.75 7.8774999999999995A2.1275 2.1275 0 1 0 5.75 3.6225Z" fill="#d8d8d8"/></svg>
<div class="a" style="left:425px;top:359.3px;width:61px;height:14px;background:#1f1e1f;border-radius:2px"></div>
<div class="a" style="left:487px;top:359.3px;width:10.5px;height:14px;background:#4a494a;border-radius:2px"></div>
<svg class="a" style="left:488.6px;top:361px" width="7.7999999999999545" height="4.199999999999989" viewBox="0 0 7.7999999999999545 4.199999999999989"><path d="M0.6 3.5999999999999885L3.8999999999999773 0.6L7.199999999999955 3.5999999999999885" fill="none" stroke="#d8d8d8" stroke-width="1.2"/></svg>
<svg class="a" style="left:488.6px;top:367.2px" width="7.7999999999999545" height="4.199999999999989" viewBox="0 0 7.7999999999999545 4.199999999999989"><path d="M0.6 0.6L3.8999999999999773 3.5999999999999885L7.199999999999955 0.6" fill="none" stroke="#d8d8d8" stroke-width="1.2"/></svg>
<div class="a" style="left:503.6px;top:306.2px;width:94.39999999999998px;height:14.6px;background:#454445;"></div>
<svg class="a" style="left:590.6px;top:311px" width="6" height="6" viewBox="0 0 6 6"><rect x="2" y="0.2" width="3.4" height="3.4" rx="0.8" fill="#151515"/><rect x="0.3" y="2" width="3.8" height="3.7" rx="1.2" fill="none" stroke="#151515" stroke-width="1.1"/></svg>
<div class="a" style="left:506.2px;top:323.8px;width:90.6px;height:14.2px;background:#4c4b4c;border-radius:2px"></div>
<div class="a" style="left:506.2px;top:339.6px;width:90.6px;height:14.2px;background:#4c4b4c;border-radius:2px"></div>
<div class="a" style="left:506.2px;top:355.40000000000003px;width:90.6px;height:14.2px;background:#4c4b4c;border-radius:2px"></div>
<div class="a" style="left:506.2px;top:371.3px;width:90.6px;height:14.2px;background:#4c4b4c;border-radius:2px"></div>
<div class="a" style="left:506.2px;top:387.20000000000005px;width:90.6px;height:14.2px;background:#4c4b4c;border-radius:2px"></div>
<div class="a" style="left:0px;top:0px;width:1px;height:462px;background:#5896cc;"></div>
<div class="a" style="left:598px;top:22px;width:1px;height:439px;background:#302c2a;"></div>
<div class="a" style="left:1px;top:460px;width:598px;height:1px;background:#302c2a;"></div>
<div class="a" style="left:599px;top:0px;width:1px;height:462px;background:#4a8ccc;"></div>
<div class="a" style="left:0px;top:461px;width:600px;height:1px;background:#4282c4;"></div>
<svg class="a" style="left:0;top:0" width="600" height="462" font-family="Liberation Sans"><text transform="translate(21.42,14.00) scale(0.932,1)" font-size="8.60" fill="#ffffff" stroke="#ffffff" stroke-width="0.14">OBS 25.0.4 (64-bit, windows) - Profile: Streaming - Scenes: Demo</text>
<text transform="translate(6.25,32.00) scale(0.923,1)" font-size="8.60" fill="#e1e0e1" stroke="#e1e0e1" stroke-width="0.14">File</text>
<text transform="translate(29.63,32.00) scale(0.954,1)" font-size="8.60" fill="#e1e0e1" stroke="#e1e0e1" stroke-width="0.14">Edit</text>
<text transform="translate(55.27,32.00) scale(0.909,1)" font-size="8.60" fill="#e1e0e1" stroke="#e1e0e1" stroke-width="0.14">View</text>
<text transform="translate(83.21,32.00) scale(0.979,1)" font-size="8.60" fill="#e1e0e1" stroke="#e1e0e1" stroke-width="0.14">Profile</text>
<text transform="translate(117.62,32.00) scale(0.951,1)" font-size="8.60" fill="#e1e0e1" stroke="#e1e0e1" stroke-width="0.14">Scene Collection</text>
<text transform="translate(190.63,32.00) scale(0.925,1)" font-size="8.60" fill="#e1e0e1" stroke="#e1e0e1" stroke-width="0.14">Tools</text>
<text transform="translate(219.28,32.00) scale(1.017,1)" font-size="8.60" fill="#e1e0e1" stroke="#e1e0e1" stroke-width="0.14">Help</text>
<text transform="translate(38.72,317.00) scale(0.842,1)" font-size="8.60" fill="#e1e0e1" stroke="#e1e0e1" stroke-width="0.14">Scenes</text>
<text transform="translate(3.46,331.00) scale(0.858,1)" font-size="8.60" fill="#e1e0e1" stroke="#e1e0e1" stroke-width="0.14">Scene 1</text>
<text transform="translate(3.46,342.70) scale(0.859,1)" font-size="8.60" fill="#e1e0e1" stroke="#e1e0e1" stroke-width="0.14">Scene 2</text>
<text transform="translate(3.46,354.40) scale(0.857,1)" font-size="8.60" fill="#e1e0e1" stroke="#e1e0e1" stroke-width="0.14">Scene 3</text>
<text transform="translate(3.46,366.10) scale(0.854,1)" font-size="8.60" fill="#e1e0e1" stroke="#e1e0e1" stroke-width="0.14">Scene 4</text>
<text transform="translate(3.46,377.80) scale(0.857,1)" font-size="8.60" fill="#e1e0e1" stroke="#e1e0e1" stroke-width="0.14">Scene 5</text>
<text transform="translate(3.46,389.50) scale(0.857,1)" font-size="8.60" fill="#e1e0e1" stroke="#e1e0e1" stroke-width="0.14">Scene 6</text>
<text transform="translate(3.46,401.20) scale(0.859,1)" font-size="8.60" fill="#e1e0e1" stroke="#e1e0e1" stroke-width="0.14">Scene 7</text>
<text transform="translate(3.46,412.90) scale(0.857,1)" font-size="8.60" fill="#e1e0e1" stroke="#e1e0e1" stroke-width="0.14">Scene 8</text>
<text transform="translate(3.46,424.60) scale(0.858,1)" font-size="8.60" fill="#e1e0e1" stroke="#e1e0e1" stroke-width="0.14">Scene 9</text>
<text transform="translate(150.96,317.00) scale(0.856,1)" font-size="8.60" fill="#e1e0e1" stroke="#e1e0e1" stroke-width="0.14">Sources</text>
<text transform="translate(133.09,331.00) scale(0.895,1)" font-size="8.60" fill="#e1e0e1" stroke="#e1e0e1" stroke-width="0.14">Image 4</text>
<text transform="translate(133.09,342.70) scale(0.899,1)" font-size="8.60" fill="#e1e0e1" stroke="#e1e0e1" stroke-width="0.14">Image 3</text>
<text transform="translate(133.20,354.40) scale(0.847,1)" font-size="8.60" fill="#e1e0e1" stroke="#e1e0e1" stroke-width="0.14">BrowserSource</text>
<text transform="translate(133.09,366.10) scale(0.901,1)" font-size="8.60" fill="#e1e0e1" stroke="#e1e0e1" stroke-width="0.14">Image 2</text>
<text transform="translate(283.09,317.00) scale(0.838,1)" font-size="8.60" fill="#e1e0e1" stroke="#e1e0e1" stroke-width="0.14">Audio Mixer</text>
<text transform="translate(231.46,331.00) scale(0.761,1)" font-size="8.60" fill="#e1e0e1" stroke="#e1e0e1" stroke-width="0.14">Desktop Audio</text>
<text transform="translate(350.01,331.00) scale(0.761,1)" font-size="8.60" fill="#e1e0e1" stroke="#e1e0e1" stroke-width="0.14">-10.5 dB</text>
<text transform="translate(231.78,372.00) scale(0.739,1)" font-size="8.60" fill="#e1e0e1" stroke="#e1e0e1" stroke-width="0.14">Mic/Aux</text>
<text transform="translate(355.04,372.00) scale(0.806,1)" font-size="8.60" fill="#e1e0e1" stroke="#e1e0e1" stroke-width="0.14">0.0 dB</text>
<text transform="translate(411.66,317.00) scale(0.853,1)" font-size="8.60" fill="#e1e0e1" stroke="#e1e0e1" stroke-width="0.14">Scene Transitions</text>
<text transform="translate(399.69,335.00) scale(0.869,1)" font-size="8.60" fill="#e1e0e1" stroke="#e1e0e1" stroke-width="0.14">Fade</text>
<text transform="translate(392.97,370.00) scale(0.890,1)" font-size="8.60" fill="#e1e0e1" stroke="#e1e0e1" stroke-width="0.14">Duration</text>
<text transform="translate(431.03,370.00) scale(0.827,1)" font-size="8.60" fill="#e1e0e1" stroke="#e1e0e1" stroke-width="0.14">300 ms</text>
<text transform="translate(532.42,317.00) scale(0.876,1)" font-size="8.60" fill="#e1e0e1" stroke="#e1e0e1" stroke-width="0.14">Controls</text>
<text transform="translate(524.65,334.20) scale(0.874,1)" font-size="8.60" fill="#e1e0e1" stroke="#e1e0e1" stroke-width="0.14">Start Streaming</text>
<text transform="translate(524.65,350.00) scale(0.879,1)" font-size="8.60" fill="#e1e0e1" stroke="#e1e0e1" stroke-width="0.14">Start Recording</text>
<text transform="translate(530.27,365.80) scale(0.846,1)" font-size="8.60" fill="#e1e0e1" stroke="#e1e0e1" stroke-width="0.14">Studio Mode</text>
<text transform="translate(536.75,381.70) scale(0.895,1)" font-size="8.60" fill="#e1e0e1" stroke="#e1e0e1" stroke-width="0.14">Settings</text>
<text transform="translate(544.35,397.60) scale(0.928,1)" font-size="8.60" fill="#e1e0e1" stroke="#e1e0e1" stroke-width="0.14">Exit</text>
<text transform="translate(342.48,457.00) scale(0.879,1)" font-size="8.60" fill="#e1e0e1" stroke="#e1e0e1" stroke-width="0.14">LIVE: 00:00:00</text>
<text transform="translate(410.18,457.00) scale(0.874,1)" font-size="8.60" fill="#e1e0e1" stroke="#e1e0e1" stroke-width="0.14">REC: 00:00:00</text>
<text transform="translate(477.71,457.00) scale(0.900,1)" font-size="8.60" fill="#e1e0e1" stroke="#e1e0e1" stroke-width="0.14">CPU: 0.9%, 60.00 fps</text></svg>
</body></html>
